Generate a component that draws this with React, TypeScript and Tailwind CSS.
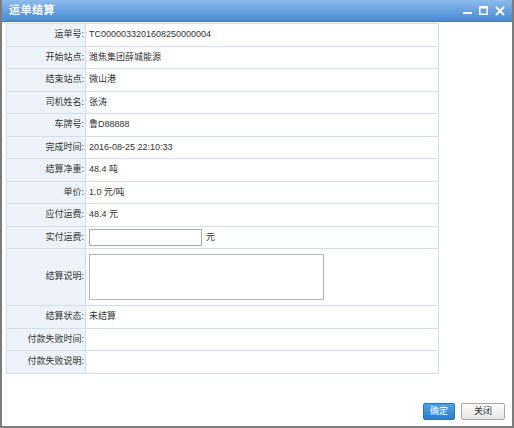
export default function App() {
  const rows: { label: string; value?: React.ReactNode; tall?: boolean }[] = [
    { label: "运单号:", value: "TC0000033201608250000004" },
    { label: "开始站点:", value: "潍焦集团薛城能源" },
    { label: "结束站点:", value: "微山港" },
    { label: "司机姓名:", value: "张涛" },
    { label: "车牌号:", value: "鲁D88888" },
    { label: "完成时间:", value: "2016-08-25 22:10:33" },
    { label: "结算净重:", value: "48.4 吨" },
    { label: "单价:", value: "1.0 元/吨" },
    { label: "应付运费:", value: "48.4 元" },
    {
      label: "实付运费:",
      value: (
        <div className="flex items-center gap-[4px]">
          <input
            type="text"
            className="w-[113px] h-[17px] border border-[#a9a9a9] bg-white outline-none"
          />
          <span>元</span>
        </div>
      ),
    },
    {
      label: "结算说明:",
      tall: true,
      value: (
        <textarea className="block w-[235px] h-[46px] border border-[#b5b5b5] bg-white outline-none resize-none" />
      ),
    },
    { label: "结算状态:", value: "未结算" },
    { label: "付款失败时间:", value: "" },
    { label: "付款失败说明:", value: "" },
  ];

  return (
    <div
      className="w-[514px] h-[428px] flex flex-col bg-white border-x-2 border-b-2 border-[#7d7d7d] text-[#333]"
      style={{ fontFamily: '"Liberation Sans", "Noto Sans CJK SC", sans-serif' }}
    >
      {/* TITLE BAR */}
      <div className="h-[22px] flex items-center justify-between px-[7px] bg-gradient-to-b from-[#8dbbec] via-[#6aa2e0] to-[#4c8ad2] border-b border-[#3f79bf]">
        <span className="text-white font-bold text-[11px] tracking-[0.5px]">运单结算</span>
        <div className="flex items-center gap-[7px] text-white">
          <svg width="9" height="9" viewBox="0 0 9 9">
            <rect x="0" y="6" width="9" height="2" fill="#fff" />
          </svg>
          <svg width="9" height="9" viewBox="0 0 9 9">
            <rect x="0.75" y="0.75" width="7.5" height="7.5" fill="none" stroke="#fff" strokeWidth="1.5" />
            <rect x="0" y="0" width="9" height="2.5" fill="#fff" />
          </svg>
          <svg width="10" height="10" viewBox="0 0 10 10">
            <path d="M1 1 L9 9 M9 1 L1 9" stroke="#fff" strokeWidth="1.8" />
          </svg>
        </div>
      </div>

      {/* FORM TABLE */}
      <div className="flex-1 pt-[1px] pl-[4px]">
        <table className="w-[433px] border-collapse text-[9px]">
          <tbody>
            {rows.map((r, i) => (
              <tr key={i} className={r.tall ? "h-[57px]" : "h-[22.5px]"}>
                <td className="w-[79px] bg-[#eef3fb] border border-[#d3deec] text-right pr-[1px] whitespace-nowrap">
                  {r.label}
                </td>
                <td className="border border-[#d3deec] pl-[3px]">{r.value}</td>
              </tr>
            ))}
          </tbody>
        </table>
      </div>

      {/* BUTTONS */}
      <div className="flex justify-end gap-[6px] pr-[7px] pb-[6px]">
        <button className="w-[32px] h-[17px] bg-gradient-to-b from-[#4fa3e6] to-[#2a7fcf] border border-[#2a72b8] text-white text-[9px] rounded-[2px]">
          确定
        </button>
        <button className="w-[44px] h-[17px] bg-gradient-to-b from-[#fdfdfd] to-[#e6e6e6] border border-[#a8a8a8] text-[#333] text-[9px] rounded-[2px]">
          关闭
        </button>
      </div>
    </div>
  );
}
